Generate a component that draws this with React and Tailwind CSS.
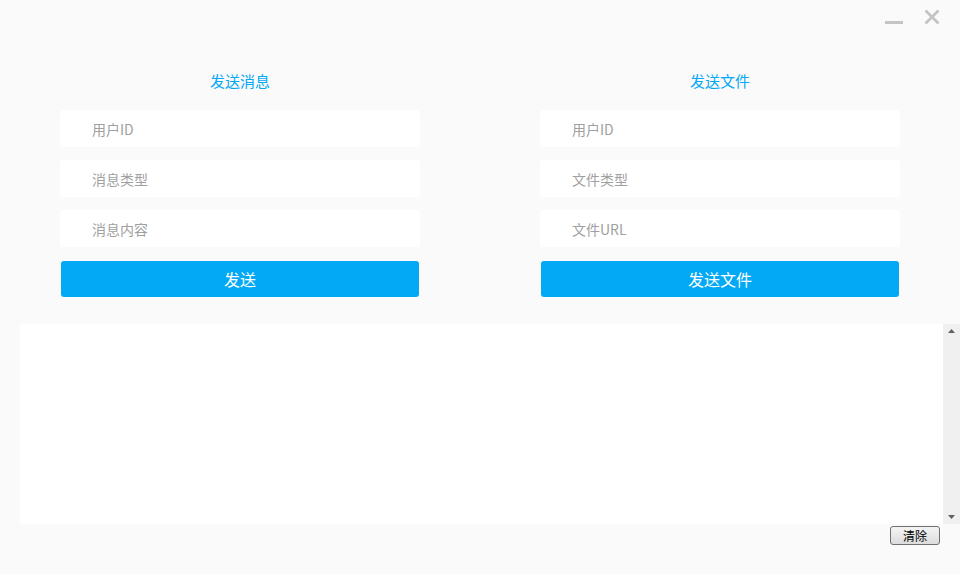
import React from "react";

const font = { fontFamily: '"Noto Sans CJK SC", "Noto Sans", sans-serif' };

function Field({ placeholder }) {
  return (
    <div className="h-[37px] w-[360px] rounded-t-[4px] bg-white flex items-center pl-[32px] pt-[2px]">
      <input
        className="w-full outline-none bg-transparent text-[14px] text-[#333] placeholder:text-[#a0a0a0]"
        placeholder={placeholder}
        style={font}
      />
    </div>
  );
}

function Column({ title, fields, button }) {
  return (
    <div className="w-[360px] flex flex-col">
      <div className="h-[20px] flex items-center justify-center text-[15px] text-[#03a9f4] leading-none">
        {title}
      </div>
      <div className="mt-[20px] flex flex-col gap-[13px]">
        {fields.map((f) => (
          <Field key={f} placeholder={f} />
        ))}
      </div>
      <div className="mt-[14px] px-[1px]">
        <button
          className="w-full h-[36px] rounded-[3px] bg-[#03a9f4] text-white text-[16px] flex items-center justify-center"
          style={font}
        >
          {button}
        </button>
      </div>
    </div>
  );
}

export default function App() {
  return (
    <div className="w-[960px] h-[574px] bg-[#fafafa] flex flex-col relative overflow-hidden" style={font}>
      <div className="absolute top-[9px] right-[20px] flex items-end gap-[21px]">
        <div className="w-[18px] h-[3px] bg-[#c4c4c4] mb-[1px]" />
        <svg width="16" height="16" viewBox="0 0 16 16">
          <path d="M1.5 1.5 L14.5 14.5 M14.5 1.5 L1.5 14.5" stroke="#c4c4c4" strokeWidth="2.8" />
        </svg>
      </div>
      <div className="pt-[70px] px-[60px] flex justify-between">
        <Column title="发送消息" fields={["用户ID", "消息类型", "消息内容"]} button="发送" />
        <Column title="发送文件" fields={["用户ID", "文件类型", "文件URL"]} button="发送文件" />
      </div>
      <div className="mt-[27px] ml-[20px] flex h-[200px]">
        <textarea className="w-[923px] h-full bg-white resize-none outline-none text-[14px] p-1" />
        <div className="w-[17px] h-full bg-[#f0f0f0] flex flex-col items-center justify-between py-[4px]">
          <svg width="9" height="6" viewBox="0 0 9 6">
            <path d="M4.5 1 L8 5 L1 5 Z" fill="#606060" />
          </svg>
          <svg width="9" height="6" viewBox="0 0 9 6">
            <path d="M1 1 L8 1 L4.5 5 Z" fill="#606060" />
          </svg>
        </div>
      </div>
      <div className="flex justify-end pr-[20px] mt-[2px]">
        <button
          className="w-[50px] h-[19px] border border-[#707070] rounded-[3px] bg-gradient-to-b from-[#f4f4f4] to-[#dcdcdc] text-[12px] text-black leading-none flex items-center justify-center"
          style={font}
        >
          清除
        </button>
      </div>
    </div>
  );
}
